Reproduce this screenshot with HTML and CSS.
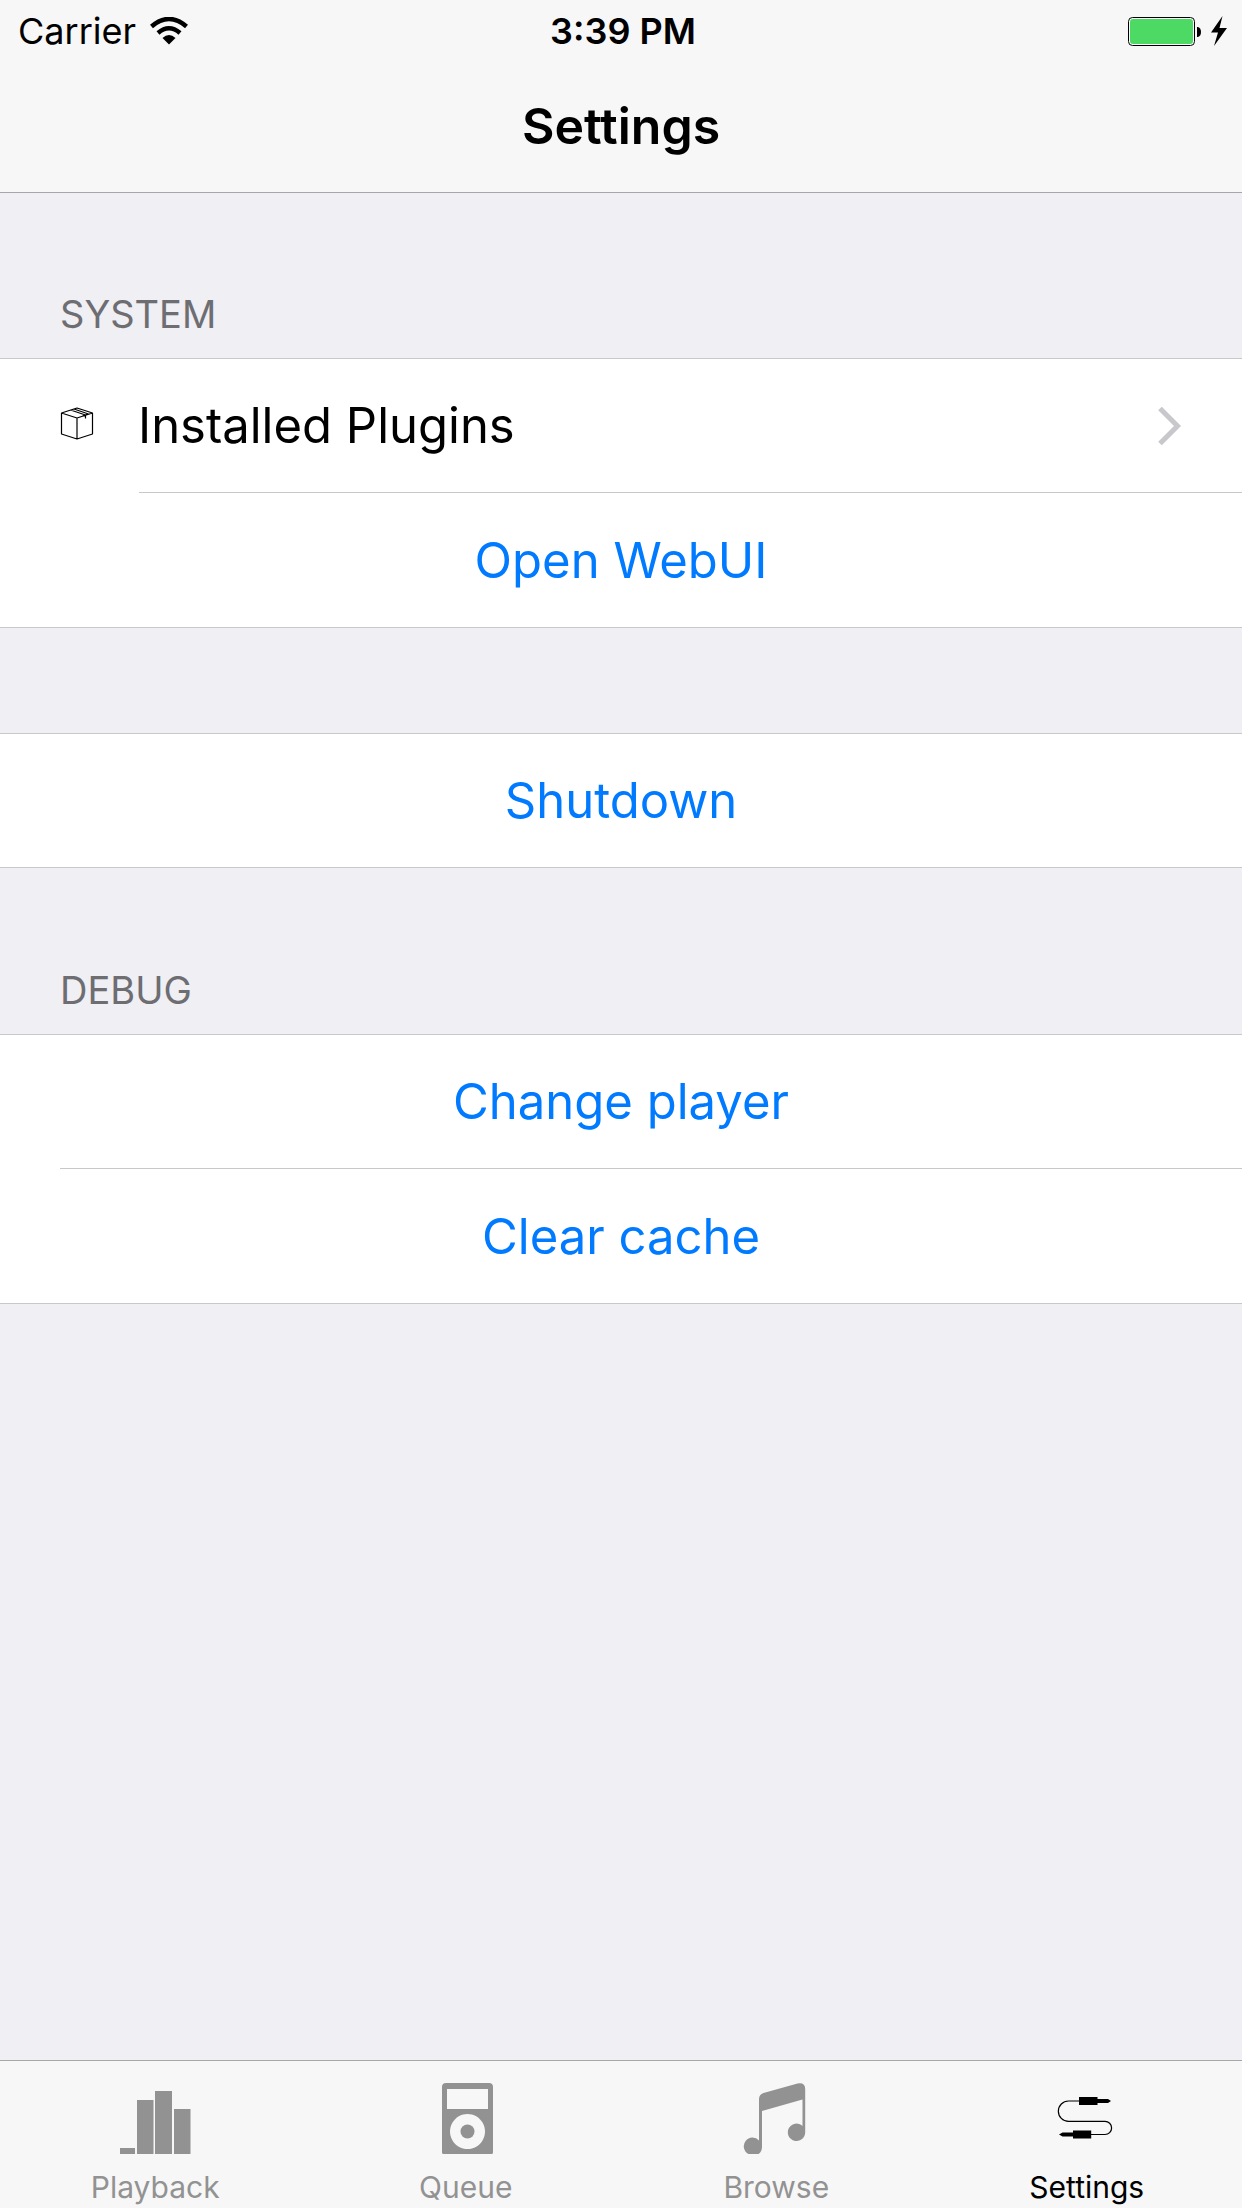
FILE: index.html
```html
<!DOCTYPE html>
<html lang="en">
<head>
<meta charset="utf-8">
<meta name="viewport" content="width=device-width, initial-scale=1">
<title>Settings</title>
<link rel="stylesheet" href="styles.css">
</head>
<body>
<div class="app">
  <header class="top-bar">
    <div class="status">
      <div class="status-left">
        <span>Carrier</span>
        <svg width="38" height="28" viewBox="0 0 38 28" aria-hidden="true">
          <path d="M1.500 9.500Q19-5.500 36.500 9.500" fill="none" stroke="#000" stroke-width="4.500"/>
          <path d="M8 16Q19 6.500 30 16" fill="none" stroke="#000" stroke-width="4.500"/>
          <path d="M12.500 21Q19 15 25.500 21L19 27.500Z"/>
        </svg>
      </div>
      <time class="clock">3:39 PM</time>
      <div class="status-right">
        <svg width="100" height="30" viewBox="0 0 100 30" aria-hidden="true">
          <rect x="0.500" y="1.500" width="66" height="28" rx="4" fill="#fff" stroke="#000"/>
          <rect x="2" y="3" width="63" height="25" rx="3" fill="#4cd964"/>
          <path d="M69 11h1q3 1 3 5t-3 5h-1z"/>
          <path d="M94.500 0L83 16.500H90L86 30L99 12H91.500Z"/>
        </svg>
      </div>
    </div>
    <h1 class="title">Settings</h1>
  </header>

  <main class="content">
    <h2 class="section-title">SYSTEM</h2>
    <div class="group">
      <a class="row row-link" href="#plugins">
        <svg class="row-icon" width="34" height="38" viewBox="0 0 34 38" fill="none" stroke="#000" stroke-width="1.200" stroke-linejoin="round" aria-hidden="true">
          <path d="M1.500 6L17 1L32.500 6V27L17 32L1.500 27ZM1.500 6L17 11L32.500 6M17 11V32M10.500 3L25.500 8V11.500M14 2L28.500 7M22.500 9L28 7"/>
        </svg>
        <span class="row-label">Installed Plugins</span>
        <svg width="24" height="40" viewBox="0 0 24 40" fill="none" stroke="#c7c7cc" stroke-width="5" aria-hidden="true">
          <path d="M2 2.500L19.500 20L2 37.500"/>
        </svg>
      </a>
      <hr class="divider divider-icon">
      <button class="row row-action row-last" type="button">Open WebUI</button>
    </div>
    <div class="group group-plain">
      <button class="row row-action" type="button">Shutdown</button>
    </div>
    <h2 class="section-title">DEBUG</h2>
    <div class="group">
      <button class="row row-action" type="button">Change player</button>
      <hr class="divider">
      <button class="row row-action row-last" type="button">Clear cache</button>
    </div>
  </main>

  <nav class="tabs" aria-label="Sections">
    <a class="tab" href="#playback">
      <svg width="90" height="72" viewBox="0 0 90 72" fill="currentColor" aria-hidden="true">
        <path d="M10 65h15v6H10zM27 17h16.500v54H27zM45 8h17v63H45zM64 26h16.500v45H64z"/>
      </svg>
      <span>Playback</span>
    </a>
    <a class="tab" href="#queue">
      <svg width="90" height="72" viewBox="0 0 90 72" fill="currentColor" aria-hidden="true">
        <path fill-rule="evenodd" d="M25 0H68Q72 0 72 4V69.500Q72 71 70.500 71H22.500Q21 71 21 69.500V4Q21 0 25 0ZM26 6V26H67V6ZM46.500 31a17.500 17.500 0 1 0 .01 0Z"/>
        <circle cx="46.500" cy="48.500" r="7"/>
      </svg>
      <span>Queue</span>
    </a>
    <a class="tab" href="#browse">
      <svg width="90" height="72" viewBox="0 0 90 72" fill="currentColor" aria-hidden="true">
        <path d="M28 16Q28 11.500 32.500 10L66.500 .4Q74.200-1 74.200 6V49.500A8.700 8.700 0 1 1 71.500 43V16.500L31 28V64Q31 68.500 27.500 71H17.500A8.700 8.700 0 1 1 28 57.500Z"/>
      </svg>
      <span>Browse</span>
    </a>
    <a class="tab tab-active" href="#settings" aria-current="page">
      <svg width="90" height="72" viewBox="0 0 90 72" fill="currentColor" aria-hidden="true">
        <path d="M37 18H26.500A10.150 10.150 0 0 0 26.500 38.300H63A6.600 6.600 0 0 1 63 51.500H49" fill="none" stroke="currentColor" stroke-width="1.200"/>
        <path d="M37 14h18.500v2H66l3 2l-3 2H55.500v2H37zM49.200 47.500v8H31v-2H20.500l-3.500-2l3.500-2H31v-2z"/>
      </svg>
      <span>Settings</span>
    </a>
  </nav>
</div>
</body>
</html>
```
FILE: styles.css
```css
* {
  box-sizing: border-box;
}

body {
  margin: 0;
  background: #efeff4;
  color: #000;
  font-family: Inter, "Liberation Sans", sans-serif;
}

svg {
  display: block;
  flex: none;
}

.app {
  display: flex;
  flex-direction: column;
  min-height: 100vh;
}

.top-bar {
  background: #f7f7f7;
  border-bottom: 1px solid #a7a7aa;
}

.status {
  display: grid;
  grid-template-columns: 1fr auto 1fr;
  align-items: center;
  height: 62px;
  padding: 0 14px 0 18px;
  font-size: 36px;
}

.status-left {
  display: flex;
  align-items: center;
  gap: 14px;
}

.clock {
  font-weight: 600;
}

.status-right {
  display: flex;
  justify-content: flex-end;
}

.title {
  margin: 0;
  padding-bottom: 2px;
  font-size: 50px;
  font-weight: 600;
  line-height: 128px;
  text-align: center;
}

.content {
  flex: 1;
}

.section-title {
  margin: 0;
  padding: 90px 60px 13px;
  color: #6d6d72;
  font-size: 38px;
  font-weight: 400;
  line-height: 62px;
}

.group {
  background: #fff;
  border: solid #c8c7cc;
  border-width: 1px 0;
}

.group-plain {
  margin: 105px 0 1px;
}

.row {
  display: flex;
  align-items: center;
  width: 100%;
  min-height: 133px;
  padding: 0 60px;
  border: 0;
  background: none;
  font: inherit;
  font-size: 49px;
}

.row-last {
  min-height: 134px;
}

.row-link {
  color: #000;
  text-decoration: none;
}

.row-icon {
  margin-right: 44px;
}

.row-label {
  flex: 1;
}

.row-action {
  justify-content: center;
  color: #007aff;
  cursor: pointer;
}

.divider {
  height: 1px;
  margin: 0 0 0 60px;
  border: 0;
  background: #c8c7cc;
}

.divider-icon {
  margin-left: 139px;
}

.tabs {
  display: flex;
  padding: 22px 0 1px;
  background: #f7f7f7;
  border-top: 1px solid #a7a7aa;
}

.tab {
  display: flex;
  flex: 1;
  flex-direction: column;
  align-items: center;
  gap: 12px;
  color: #929292;
  font-size: 30px;
  line-height: 40px;
  text-decoration: none;
}

.tab-active {
  color: #000;
}
```
